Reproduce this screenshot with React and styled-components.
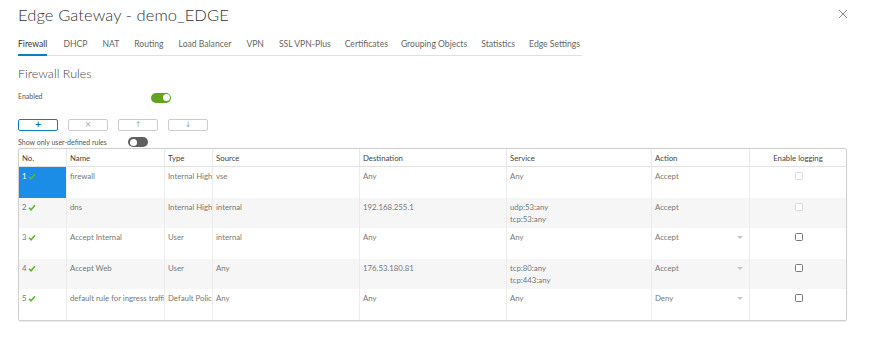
import React from 'react'
import styled, { createGlobalStyle } from 'styled-components'

const GlobalStyle = createGlobalStyle`
  body {
    margin: 0;
    background: #fff;
    font-family: Lato, "Open Sans", sans-serif;
    color: #565656;
  }
`

const Page = styled.div`
  width: 875px;
  height: 342px;
  box-sizing: border-box;
  padding: 4px 28px 0 18px;
  overflow: hidden;
`

const Header = styled.div`
  display: flex;
  align-items: center;
  justify-content: space-between;
  height: 22px;
`

const Title = styled.h1`
  margin: 0;
  font-size: 16.5px;
  font-weight: 300;
  color: #333;
  letter-spacing: 0.1px;
`

const Close = styled.button`
  border: 0;
  background: none;
  padding: 0;
  width: 12px;
  height: 12px;
  display: flex;
  margin-right: -3px;
`

const Tabs = styled.nav`
  display: flex;
  margin-top: 12px;
  width: 564px;
  border-bottom: 1px solid #e0e0e0;
`

const Tab = styled.div`
  font-size: 8.6px;
  color: ${p => (p.$active ? '#333' : '#666')};
  padding: 1px 0 5px;
  margin-right: ${p => p.$gap}px;
  border-bottom: 2px solid ${p => (p.$active ? '#0a7fc4' : 'transparent')};
  margin-bottom: -1px;
  white-space: nowrap;
`

const Heading = styled.h2`
  margin: 10px 0 0;
  font-size: 12.5px;
  font-weight: 300;
  color: #444;
`

const SwitchRow = styled.div`
  display: flex;
  align-items: center;
  height: ${p => p.$h || 12}px;
  margin-top: ${p => p.$mt}px;
`

const Label = styled.span`
  font-size: 7px;
  color: #555;
  width: ${p => p.$w}px;
`

const Toggle = styled.span`
  position: relative;
  display: inline-block;
  width: 20px;
  height: 10px;
  border-radius: 5px;
  background: ${p => (p.$on ? '#62a420' : '#5f5f5f')};
  margin-top: ${p => p.$dy || 0}px;
  &::after {
    content: '';
    position: absolute;
    top: 1.5px;
    ${p => (p.$on ? 'right: 1.5px;' : 'left: 1.5px;')}
    width: 7px;
    height: 7px;
    border-radius: 50%;
    background: #fff;
  }
`

const Buttons = styled.div`
  display: flex;
  gap: 10px;
  margin-top: 17px;
`

const Btn = styled.button`
  width: 40px;
  height: 12px;
  box-sizing: border-box;
  border: 1px solid ${p => (p.$primary ? '#0a7fc4' : '#ccc')};
  border-radius: 2px;
  background: #fff;
  color: ${p => (p.$primary ? '#0a6ba8' : '#a8a8a8')};
  font-size: 8px;
  font-weight: ${p => (p.$primary ? 700 : 400)};
  line-height: 10px;
  padding: 0;
  display: flex;
  align-items: center;
  justify-content: center;
  font-family: "DejaVu Sans", Lato, sans-serif;
`

const Grid = styled.table`
  margin-top: 1px;
  width: 829px;
  table-layout: fixed;
  border-collapse: separate;
  border-spacing: 0;
  border: 1px solid #cfcfcf;
  border-radius: 2px;
  box-shadow: 0 1px 1px rgba(0, 0, 0, 0.08);
  font-size: 7.8px;
`

const Th = styled.th`
  height: 18px;
  padding: 0 3px;
  text-align: ${p => p.$align || 'left'};
  font-weight: 400;
  color: #444;
  border-bottom: 1px solid #e2e2e2;
  border-left: ${p => (p.$first ? 'none' : '1px solid #e9e9e9')};
  box-sizing: border-box;
`

const Tr = styled.tr`
  background: ${p => (p.$alt ? '#f6f6f6' : '#fff')};
`

const Td = styled.td`
  height: ${p => p.$h}px;
  padding: 4px 2px 0 3px;
  vertical-align: top;
  color: ${p => (p.$sel ? '#fff' : '#777')};
  background: ${p => (p.$sel ? '#1c8de6' : 'transparent')};
  border-left: ${p => (p.$first ? 'none' : '1px solid #ececec')};
  text-align: ${p => p.$align || 'left'};
  white-space: nowrap;
  overflow: hidden;
  text-overflow: clip;
  box-sizing: border-box;
  line-height: 11px;
  position: relative;
`

const Line = styled.div`
  height: 11px;
  & + & {
    margin-top: 1px;
  }
`

const NoCell = styled.span`
  display: inline-flex;
  align-items: center;
  gap: 1px;
`

const Caret = styled.span`
  position: absolute;
  right: 6px;
  top: 8px;
  width: 0;
  height: 0;
  border-left: 3px solid transparent;
  border-right: 3px solid transparent;
  border-top: 3px solid #c6c6c6;
`

const Box = styled.span`
  display: inline-block;
  width: 6px;
  height: 6px;
  border: 1px solid ${p => (p.$disabled ? '#d8d8d8' : '#777')};
  border-radius: 1.5px;
  background: #fff;
  margin-top: 1px;
`

const Check = () => (
  <svg width="8" height="7" viewBox="0 0 8 7">
    <path d="M1 3.8 L3 5.8 L7 1.2" fill="none" stroke="#5cb82a" strokeWidth="1.6" />
  </svg>
)

const cols = [
  { title: 'No.', w: 47 },
  { title: 'Name', w: 98 },
  { title: 'Type', w: 48 },
  { title: 'Source', w: 147 },
  { title: 'Destination', w: 147 },
  { title: 'Service', w: 145 },
  { title: 'Action', w: 98 },
  { title: 'Enable logging', w: 97, align: 'center' }
]

const rules = [
  { no: 1, name: 'firewall', type: 'Internal High', src: 'vse', dst: 'Any', svc: ['Any'], action: 'Accept', locked: true, h: 31 },
  { no: 2, name: 'dns', type: 'Internal High', src: 'internal', dst: '192.168.255.1', svc: ['udp:53:any', 'tcp:53:any'], action: 'Accept', locked: true, h: 30 },
  { no: 3, name: 'Accept Internal', type: 'User', src: 'internal', dst: 'Any', svc: ['Any'], action: 'Accept', h: 31 },
  { no: 4, name: 'Accept Web', type: 'User', src: 'Any', dst: '176.53.180.81', svc: ['tcp:80:any', 'tcp:443:any'], action: 'Accept', h: 30 },
  { no: 5, name: 'default rule for ingress traffic', type: 'Default Policy', src: 'Any', dst: 'Any', svc: ['Any'], action: 'Deny', h: 31 }
]

const tabs = [
  ['Firewall', 16], ['DHCP', 15], ['NAT', 15], ['Routing', 15], ['Load Balancer', 15],
  ['VPN', 15], ['SSL VPN-Plus', 14], ['Certificates', 13], ['Grouping Objects', 14],
  ['Statistics', 14], ['Edge Settings', 0]
]

export default function App() {
  return (
    <Page>
      <GlobalStyle />
      <Header>
        <Title>Edge Gateway - demo_EDGE</Title>
        <Close aria-label="close">
          <svg width="10" height="10" viewBox="0 0 10 10">
            <path d="M1 1 L9 9 M9 1 L1 9" stroke="#888" strokeWidth="1" />
          </svg>
        </Close>
      </Header>
      <Tabs>
        {tabs.map(([t, gap], i) => (
          <Tab key={t} $active={i === 0} $gap={gap}>{t}</Tab>
        ))}
      </Tabs>
      <Heading>Firewall Rules</Heading>
      <SwitchRow $mt={9}>
        <Label $w={133}>Enabled</Label>
        <Toggle $on $dy={3} />
      </SwitchRow>
      <Buttons>
        <Btn $primary>+</Btn>
        <Btn>×</Btn>
        <Btn>↑</Btn>
        <Btn>↓</Btn>
      </Buttons>
      <SwitchRow $mt={6} $h={10}>
        <Label $w={110}>Show only user-defined rules</Label>
        <Toggle />
      </SwitchRow>
      <Grid>
        <colgroup>
          {cols.map(c => <col key={c.title} style={{ width: c.w }} />)}
        </colgroup>
        <thead>
          <tr>
            {cols.map((c, i) => (
              <Th key={c.title} $first={i === 0} $align={c.align}>{c.title}</Th>
            ))}
          </tr>
        </thead>
        <tbody>
          {rules.map((r, i) => (
            <Tr key={r.no} $alt={i % 2 === 1}>
              <Td $first $h={r.h} $sel={i === 0}>
                <NoCell>{r.no}<Check /></NoCell>
              </Td>
              <Td $h={r.h}>{r.name}</Td>
              <Td $h={r.h}>{r.type}</Td>
              <Td $h={r.h}>{r.src}</Td>
              <Td $h={r.h}>{r.dst}</Td>
              <Td $h={r.h}>
                {r.svc.map(s => <Line key={s}>{s}</Line>)}
              </Td>
              <Td $h={r.h}>
                {r.action}
                {!r.locked && <Caret />}
              </Td>
              <Td $h={r.h} $align="center">
                <Box $disabled={r.locked} />
              </Td>
            </Tr>
          ))}
        </tbody>
      </Grid>
    </Page>
  )
}
